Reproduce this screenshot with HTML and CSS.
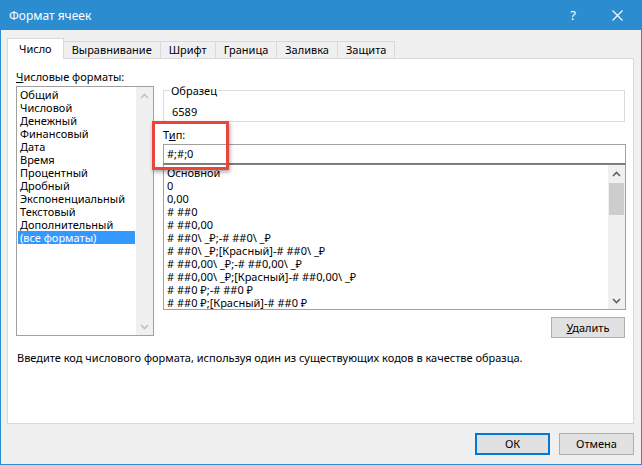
FILE: index.html
```html
<!DOCTYPE html>
<html lang="ru">
<head>
<meta charset="utf-8">
<title>Формат ячеек</title>
<link rel="stylesheet" href="styles.css">
</head>
<body>
<div class="window">
  <div class="titlebar">
    <span class="title">Формат ячеек</span>
    <span class="help">?</span>
    <span class="close"><svg width="11" height="11" viewBox="0 0 11 11"><path d="M0.5 0.5 L10.5 10.5 M10.5 0.5 L0.5 10.5" stroke="#fff" stroke-width="1.1" fill="none"/></svg></span>
  </div>
  <div class="content">
    <div class="tabs">
      <div class="tab active">Число</div>
      <div class="tab">Выравнивание</div>
      <div class="tab">Шрифт</div>
      <div class="tab">Граница</div>
      <div class="tab">Заливка</div>
      <div class="tab">Защита</div>
    </div>
    <div class="panel">
      <div class="columns">
        <div class="left-col">
          <div class="label"><u>Ч</u>исловые форматы:</div>
          <div class="listbox cat-list">
            <ul class="items">
              <li>Общий</li>
              <li>Числовой</li>
              <li>Денежный</li>
              <li>Финансовый</li>
              <li>Дата</li>
              <li>Время</li>
              <li>Процентный</li>
              <li>Дробный</li>
              <li>Экспоненциальный</li>
              <li>Текстовый</li>
              <li>Дополнительный</li>
              <li class="selected">(все форматы)</li>
            </ul>
            <div class="scrollbar disabled">
              <div class="arrow"><svg width="9" height="6" viewBox="0 0 9 6"><polyline points="1,5 4.5,1.5 8,5" fill="none" stroke="currentColor" stroke-width="1.6"/></svg></div>
              <div class="track"></div>
              <div class="arrow"><svg width="9" height="6" viewBox="0 0 9 6"><polyline points="1,1 4.5,4.5 8,1" fill="none" stroke="currentColor" stroke-width="1.6"/></svg></div>
            </div>
          </div>
        </div>
        <div class="right-col">
          <fieldset class="sample">
            <legend>Образец</legend>
            <div class="sample-value">6589</div>
          </fieldset>
          <div class="label type-label">Т<u>и</u>п:</div>
          <div class="input">#;#;0</div>
          <div class="listbox type-list">
            <ul class="items">
              <li>Основной</li>
              <li>0</li>
              <li>0,00</li>
              <li># ##0</li>
              <li># ##0,00</li>
              <li># ##0\ _₽;-# ##0\ _₽</li>
              <li># ##0\ _₽;[Красный]-# ##0\ _₽</li>
              <li># ##0,00\ _₽;-# ##0,00\ _₽</li>
              <li># ##0,00\ _₽;[Красный]-# ##0,00\ _₽</li>
              <li># ##0 ₽;-# ##0 ₽</li>
              <li># ##0 ₽;[Красный]-# ##0 ₽</li>
            </ul>
            <div class="scrollbar">
              <div class="arrow"><svg width="9" height="6" viewBox="0 0 9 6"><polyline points="1,5 4.5,1.5 8,5" fill="none" stroke="currentColor" stroke-width="1.6"/></svg></div>
              <div class="track"><div class="thumb"></div></div>
              <div class="arrow"><svg width="9" height="6" viewBox="0 0 9 6"><polyline points="1,1 4.5,4.5 8,1" fill="none" stroke="currentColor" stroke-width="1.6"/></svg></div>
            </div>
          </div>
          <div class="delete-row">
            <button class="btn delete"><u>У</u>далить</button>
          </div>
        </div>
      </div>
      <p class="hint">Введите код числового формата, используя один из существующих кодов в качестве образца.</p>
      <div class="callout"></div>
    </div>
    <div class="buttons">
      <button class="btn default">ОК</button>
      <button class="btn">Отмена</button>
    </div>
  </div>
</div>
</body>
</html>
```

FILE: styles.css
```css
* { box-sizing: border-box; }
html, body {
  margin: 0;
  padding: 0;
  background: #f0f0f0;
}
body {
  font-family: "Noto Sans", "Open Sans", sans-serif;
  font-size: 11px;
  line-height: 15px;
  color: #000;
}
.window {
  width: 642px;
  height: 465px;
  display: flex;
  flex-direction: column;
  border: 1px solid #2b8dd0;
  border-top: none;
  background: #f0f0f0;
}
.titlebar {
  height: 30px;
  flex: none;
  background: #2b8dd0;
  color: #fff;
  display: flex;
  align-items: center;
  padding-left: 9px;
  margin: 0 -1px;
}
.title {
  flex: 1;
  font-size: 12px;
  color: #fff;
}
.help {
  font-size: 13px;
  width: 14px;
  text-align: center;
  margin-right: 32px;
}
.close {
  width: 11px;
  height: 11px;
  margin-right: 19px;
  display: flex;
}
.content {
  flex: 1;
  display: flex;
  flex-direction: column;
  padding: 8px 7px 0 6px;
}
.tabs {
  display: flex;
  align-items: flex-end;
  height: 20px;
  position: relative;
  z-index: 1;
}
.tab {
  height: 17px;
  line-height: 16px;
  padding: 0 8px;
  border: 1px solid #d9d9d9;
  border-left: none;
  border-bottom: none;
  background: #f0f0f0;
  white-space: nowrap;
}
.tab.active {
  height: 21px;
  margin-bottom: -1px;
  padding: 2px 11px 0 11px;
  background: #fff;
  border-left: 1px solid #d9d9d9;
}
.panel {
  position: relative;
  height: 366px;
  background: #fff;
  border: 1px solid #d9d9d9;
  padding: 10px 7px 0 8px;
}
.columns {
  display: flex;
  gap: 9px;
}
.left-col {
  width: 138px;
  flex: none;
}
.label {
  height: 15px;
  white-space: nowrap;
}
.listbox {
  display: flex;
  border: 1px solid #a0a0a0;
  background: #fff;
  overflow: hidden;
}
.cat-list {
  margin-top: 2px;
  height: 250px;
}
.items {
  list-style: none;
  margin: 0;
  padding: 0 1px;
  flex: 1;
  min-width: 0;
  overflow: hidden;
}
.items li {
  height: 13px;
  line-height: 13px;
  padding-left: 2px;
  white-space: nowrap;
}
.cat-list .items {
  padding-top: 1px;
}
.items li.selected {
  background: #3399ff;
  color: #fff;
}
.scrollbar {
  width: 17px;
  flex: none;
  display: flex;
  flex-direction: column;
  background: #f0f0f0;
  color: #606060;
}
.scrollbar.disabled {
  color: #c0c0c0;
}
.arrow {
  height: 17px;
  display: flex;
  align-items: center;
  justify-content: center;
}
.track {
  flex: 1;
  padding: 1px 1px 0 1px;
}
.thumb {
  height: 32px;
  background: #cdcdcd;
}
.right-col {
  flex: 1;
  min-width: 0;
  padding-top: 14px;
}
.sample {
  margin: 0 1px 0 0;
  padding: 0 8px 2px 8px;
  border: 1px solid #dcdcdc;
  min-width: 0;
}
.sample legend {
  padding: 0 1px;
  margin-left: -2px;
}
.sample-value {
  padding-top: 6px;
  height: 21px;
}
.type-label {
  margin-top: 5px;
}
.input {
  margin-top: 2px;
  height: 20px;
  line-height: 18px;
  border: 1px solid #a0a0a0;
  border-bottom-color: #7a7a7a;
  padding-left: 3px;
}
.type-list {
  height: 146px;
  border-top-color: #828282;
}
.type-list .items {
  padding: 1px 3px 0 3px;
}
.type-list .items li {
  padding-left: 0;
}
.delete-row {
  display: flex;
  justify-content: flex-end;
  margin-top: 7px;
  padding-right: 1px;
}
.btn {
  font: inherit;
  color: #000;
  background: #e1e1e1;
  border: 1px solid #adadad;
  height: 22px;
  padding: 0;
  line-height: 18px;
}
.delete {
  width: 74px;
  height: 21px;
}
.hint {
  margin: 12px 0 0 1px;
  white-space: nowrap;
}
.callout {
  position: absolute;
  left: 144px;
  top: 62px;
  width: 77px;
  height: 49px;
  border: 3px solid #e8453c;
  box-shadow: 1px 2px 4px rgba(0, 0, 0, 0.35);
  pointer-events: none;
}
.buttons {
  display: flex;
  justify-content: flex-end;
  gap: 9px;
  margin-top: 9px;
}
.buttons .btn {
  width: 75px;
}
.btn.default {
  border: 2px solid #0078d7;
}
```
